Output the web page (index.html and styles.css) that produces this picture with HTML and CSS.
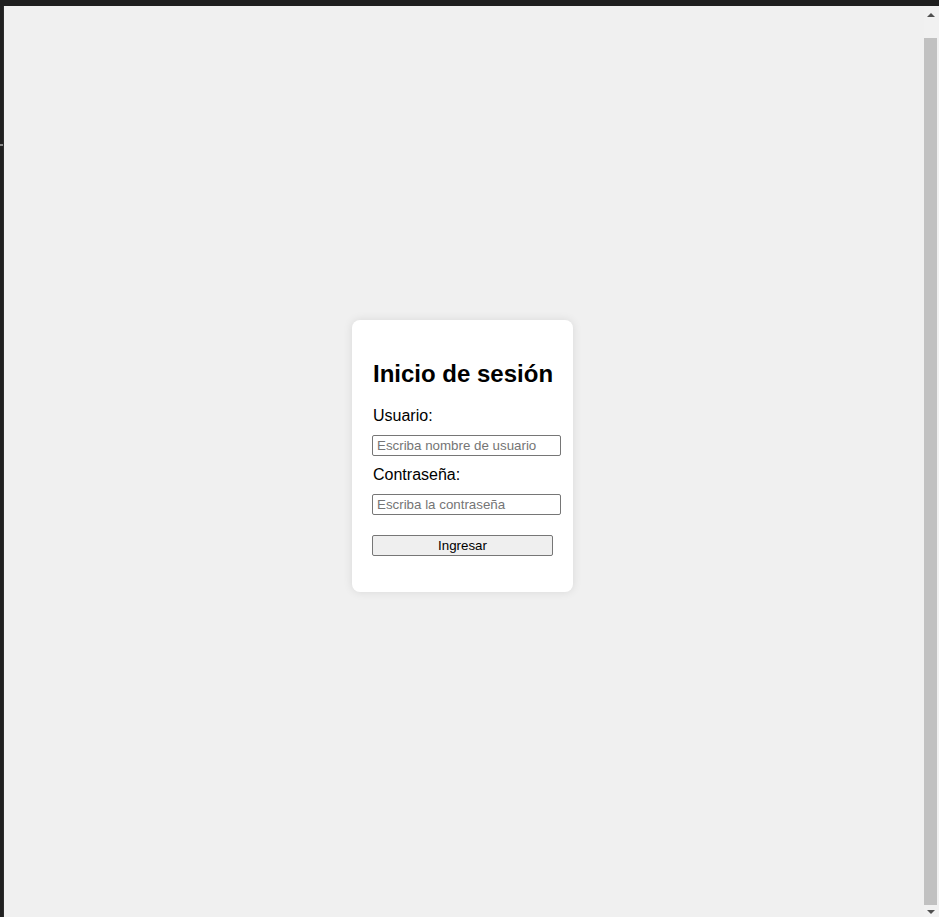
FILE: index.html
```html
<!DOCTYPE html>
<html lang="es">
<head>
<meta charset="utf-8">
<title>Inicio de sesión</title>
<link rel="stylesheet" href="styles.css">
</head>
<body>
  <div class="topbar"></div>
  <div class="window">
    <div class="leftedge"><span class="tick"></span></div>
    <main class="viewport">
      <div class="card">
        <h2 class="title">Inicio de sesión</h2>
        <form class="form">
          <label class="label" for="usuario">Usuario:</label>
          <input class="field" id="usuario" type="text" placeholder="Escriba nombre de usuario">
          <label class="label" for="clave">Contraseña:</label>
          <input class="field" id="clave" type="password" placeholder="Escriba la contraseña">
          <button class="submit" type="button">Ingresar</button>
        </form>
      </div>
    </main>
    <div class="scrollbar">
      <span class="arrow-up"></span>
      <span class="thumb"></span>
      <span class="arrow-down"></span>
    </div>
  </div>
</body>
</html>
```
FILE: styles.css
```css
html, body {
  margin: 0;
  padding: 0;
}
body {
  width: 939px;
  height: 917px;
  display: flex;
  flex-direction: column;
  background: #f0f0f0;
  font-family: "Liberation Sans", Arial, sans-serif;
  overflow: hidden;
}
.topbar {
  height: 6px;
  background: #1f1f1f;
  flex: none;
}
.window {
  flex: 1;
  display: flex;
  min-height: 0;
}
.leftedge {
  width: 3px;
  border-right: 1px solid #2c2c2c;
  background: #202020;
  display: flex;
  flex-direction: column;
  padding-top: 138px;
  box-sizing: content-box;
}
.tick {
  display: block;
  height: 2px;
  width: 3px;
  background: #8a8a8a;
}
.viewport {
  flex: 1;
  display: flex;
  align-items: center;
  justify-content: center;
  padding: 0 3px 12px 0;
  background: #f0f0f0;
}
.card {
  width: 181px;
  padding: 20px;
  background: #ffffff;
  border-radius: 8px;
  box-shadow: 0 0 10px rgba(0, 0, 0, 0.1);
}
.title {
  margin: 20px 0 19px;
  padding-left: 1px;
  font-size: 24px;
  font-weight: bold;
  line-height: 28px;
  color: #000;
  white-space: nowrap;
}
.form {
  display: flex;
  flex-direction: column;
  align-items: flex-start;
  margin: 0 0 16px;
}
.label {
  display: block;
  padding-left: 1px;
  font-size: 16px;
  line-height: 18px;
  color: #000;
  margin-bottom: 10px;
}
.field {
  display: block;
  width: 181px;
  box-sizing: content-box;
  height: 15px;
  padding: 2px 3px 2px 4px;
  width: 180px;
  border: 1px solid #767676;
  border-radius: 2px;
  background: #fff;
  font-family: "Liberation Sans", Arial, sans-serif;
  font-size: 13.333px;
  line-height: 15px;
  color: #000;
  margin: 0 0 10px;
  outline: none;
}
.field::placeholder {
  color: #757575;
}
.submit {
  display: block;
  width: 181px;
  height: 21px;
  box-sizing: border-box;
  margin: 10px 0 0;
  padding: 0 6px;
  border: 1px solid #767676;
  border-radius: 2px;
  background: #efefef;
  font-family: "Liberation Sans", Arial, sans-serif;
  font-size: 13.333px;
  line-height: 19px;
  color: #000;
}
.scrollbar {
  width: 15px;
  flex: none;
  background: #f1f1f1;
  display: flex;
  flex-direction: column;
  align-items: flex-start;
  padding-top: 7px;
  box-sizing: border-box;
}
.arrow-up {
  display: block;
  width: 0;
  height: 0;
  margin-left: 3px;
  border-left: 4px solid transparent;
  border-right: 4px solid transparent;
  border-bottom: 4px solid #505050;
}
.thumb {
  display: block;
  width: 13px;
  height: 867px;
  margin-top: 21px;
  background: #c1c1c1;
}
.arrow-down {
  display: block;
  width: 0;
  height: 0;
  margin-top: 5px;
  margin-left: 3px;
  border-left: 4px solid transparent;
  border-right: 4px solid transparent;
  border-top: 4px solid #505050;
}
```
